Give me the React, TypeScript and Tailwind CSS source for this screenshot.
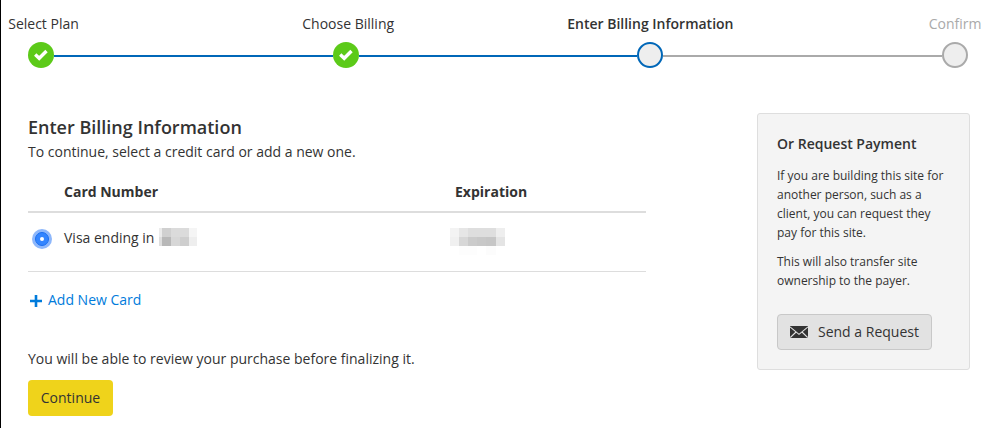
type StepState = "done" | "current" | "upcoming";

const steps: { label: string; state: StepState; shift: string }[] = [
  { label: "Select Plan", state: "done", shift: "ml-[5px]" },
  { label: "Choose Billing", state: "done", shift: "ml-[5px]" },
  { label: "Enter Billing Information", state: "current", shift: "" },
  { label: "Confirm", state: "upcoming", shift: "" },
];

const labelStyle: Record<StepState, string> = {
  done: "text-[#333]",
  current: "font-semibold text-[#333]",
  upcoming: "text-[#aaa]",
};

const circleStyle: Record<StepState, string> = {
  done: "bg-[#5cca19]",
  current: "border-2 border-[#0067b8] bg-[#eee]",
  upcoming: "border-2 border-[#aaa] bg-[#eee]",
};

function Step({ label, state, shift }: { label: string; state: StepState; shift: string }) {
  return (
    <li className="flex w-[26px] shrink-0 flex-col items-center">
      <span className={`h-[28px] whitespace-nowrap leading-5 ${shift} ${labelStyle[state]}`}>{label}</span>
      <span className={`flex size-[26px] items-center justify-center rounded-full ${circleStyle[state]}`}>
        {state === "done" && (
          <svg width="14" height="12" viewBox="0 0 14 12" fill="none" stroke="white" strokeWidth="3.4">
            <path d="M1.2 5.6 5.2 9.3 12.5 2" />
          </svg>
        )}
      </span>
    </li>
  );
}

function Connector({ color }: { color: string }) {
  return <li className={`mt-[41px] h-[2px] flex-1 ${color}`} />;
}

function Mosaic({ rows }: { rows: [string, string][][] }) {
  return (
    <div className="flex flex-col">
      {rows.map((row, r) => (
        <div key={r} className="flex">
          {row.map(([width, color], c) => (
            <span key={c} className={`h-[9px] ${width} ${color}`} />
          ))}
        </div>
      ))}
    </div>
  );
}

const cardDigits: [string, string][][] = [
  [["w-[3px]", "bg-[#ebebeb]"], ["w-[9px]", "bg-[#d0d0d0]"], ["w-[18px]", "bg-[#dbdbdb]"], ["w-[8px]", "bg-[#f5f5f5]"]],
  [["w-[3px]", "bg-[#dedede]"], ["w-[9px]", "bg-[#b8b8b8]"], ["w-[9px]", "bg-[#d7d7d7]"], ["w-[9px]", "bg-[#cecece]"], ["w-[8px]", "bg-[#eee]"]],
];

const expiryDigits: [string, string][][] = [
  [["w-[9px]", "bg-[#f3f3f3]"], ["w-[9px]", "bg-[#e6e6e6]"], ["w-[28px]", "bg-[#dedede]"], ["w-[9px]", "bg-[#eee]"]],
  [["w-[9px]", "bg-[#f0f0f0]"], ["w-[9px]", "bg-[#d7d7d7]"], ["w-[9px]", "bg-[#cbcbcb]"], ["w-[9px]", "bg-[#c8c8c8]"], ["w-[10px]", "bg-[#c6c6c6]"], ["w-[9px]", "bg-[#e4e4e4]"]],
  [["w-[9px]", "bg-white"], ["w-[18px]", "bg-[#fdfdfd]"], ["w-[9px]", "bg-white"], ["w-[10px]", "bg-[#fcfcfc]"]],
];

export default function App() {
  return (
    <div className="h-[428px] overflow-hidden border-l border-black bg-white font-['Open_Sans','Noto_Sans',sans-serif] text-[14px] text-[#333]">
      <ol className="ml-[27px] flex w-[940px] pt-[14px]">
        {steps.map((step, i) => [
          i > 0 && <Connector key={`line-${i}`} color={i < 3 ? "bg-[#0067b8]" : "bg-[#aaa]"} />,
          <Step key={step.label} {...step} />,
        ])}
      </ol>

      <div className="ml-[27px] mt-[45px] flex w-[942px] items-start justify-between">
        <main className="w-[618px]">
          <h1 className="mt-[2px] text-[18px] font-semibold leading-[25px]">Enter Billing Information</h1>
          <p className="mt-[2px] leading-5">To continue, select a credit card or add a new one.</p>

          <div className="mt-5 flex h-[31px] border-b-2 border-[#ddd] pl-9 font-bold leading-5">
            <span className="w-[391px]">Card Number</span>
            <span>Expiration</span>
          </div>
          <div className="flex h-[59px] items-start border-b border-[#ddd] pl-1 pt-[15px]">
            <span role="radio" aria-checked="true" className="mt-[1px] flex size-5 items-center justify-center rounded-full bg-[#8db7fb]">
              <span className="flex size-[14px] items-center justify-center rounded-full border border-[#1a6ff0] bg-[#3385ff]">
                <span className="size-1 rounded-full bg-white" />
              </span>
            </span>
            <span className="ml-3 w-[95px] whitespace-nowrap leading-5">Visa ending in</span>
            <div className="w-[291px]"><Mosaic rows={cardDigits} /></div>
            <Mosaic rows={expiryDigits} />
          </div>

          <a className="mt-[18px] flex h-5 items-center pl-[2px] leading-5 text-[#007bdb]">
            <svg className="mt-px" width="12" height="12" viewBox="0 0 12 12" fill="none" stroke="currentColor" strokeWidth="2.6">
              <path d="M6 0v12M0 6h12" />
            </svg>
            <span className="ml-[6px]">Add New Card</span>
          </a>

          <p className="mt-[39px] leading-5">You will be able to review your purchase before finalizing it.</p>
          <button className="mt-[11px] h-9 w-[85px] rounded-[4px] bg-[#efd31b] pb-[2px]">Continue</button>
        </main>

        <aside className="h-[257px] w-[213px] rounded-[3px] border border-[#dedede] bg-[#f4f4f4] pl-[19px] pt-5">
          <h2 className="font-semibold leading-5">Or Request Payment</h2>
          <p className="mt-3 w-[174px] text-[12px] leading-[19px]">
            If you are building this site for another person, such as a client, you can request they pay for this site.
          </p>
          <p className="mt-[10px] w-[160px] text-[12px] leading-[19px]">This will also transfer site ownership to the payer.</p>
          <button className="mt-6 flex h-9 w-[155px] items-center rounded-[4px] border border-[#c8c8c8] bg-[#e2e2e2] pl-3">
            <svg width="18" height="12" viewBox="0 0 18 12">
              <path d="M0 0h18v12H0z" fill="#333" />
              <path d="M0 .8 9 8.3 18 .8M.3 11.5 6 6M17.7 11.5 12 6" fill="none" stroke="#e2e2e2" strokeWidth="1.1" />
            </svg>
            <span className="ml-[10px] pb-[2px]">Send a Request</span>
          </button>
        </aside>
      </div>
    </div>
  );
}
